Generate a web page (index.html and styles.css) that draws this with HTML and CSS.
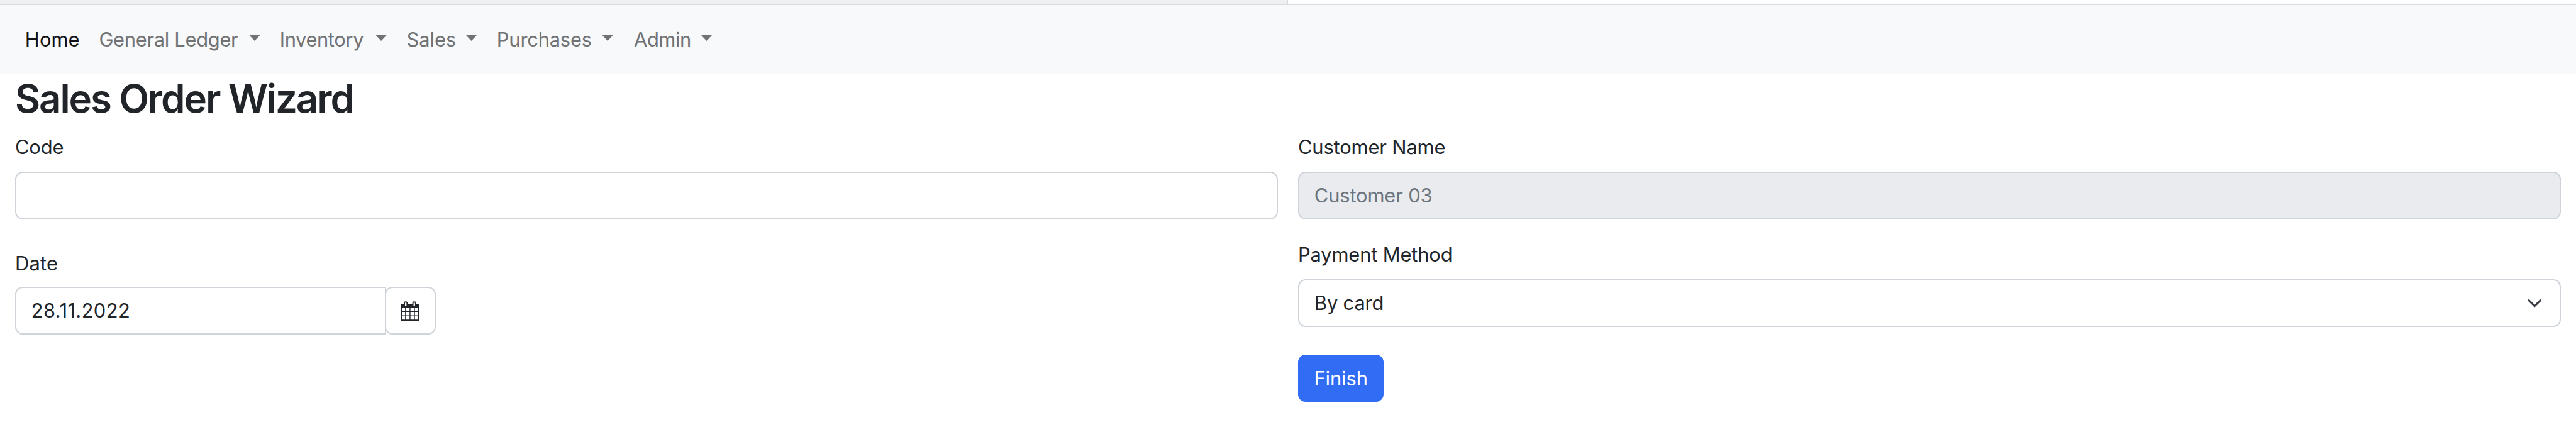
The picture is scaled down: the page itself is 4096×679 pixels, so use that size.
FILE: index.html
```
<!DOCTYPE html>
<html lang="en">
<head>
<meta charset="utf-8">
<title>Sales Order Wizard</title>
<link rel="stylesheet" href="styles.css">
</head>
<body>
<div class="tabstrip"><div class="tab-inactive"></div></div>
<nav class="navbar">
  <a class="nav-link home active">Home</a>
  <a class="nav-link ledger">General Ledger<i class="caret"></i></a>
  <a class="nav-link inventory">Inventory<i class="caret"></i></a>
  <a class="nav-link sales">Sales<i class="caret"></i></a>
  <a class="nav-link purchases">Purchases<i class="caret"></i></a>
  <a class="nav-link admin">Admin<i class="caret"></i></a>
</nav>
<main class="container">
  <h2 class="title">Sales Order Wizard</h2>
  <div class="row">
    <section class="col">
      <div class="field field-code">
        <label class="label">Code</label>
        <div class="control"></div>
      </div>
      <div class="field">
        <label class="label label-date">Date</label>
        <div class="date-group">
          <div class="control date-input">28.11.2022</div>
          <button class="control date-button" aria-label="Choose date">
            <svg class="calendar" viewBox="0 0 30 33">
              <path fill="#212529" d="M3 5H5V4.500a3.200 3.200 0 0 1 6.400 0V5H18.600V4.500a3.200 3.200 0 0 1 6.400 0V5H27a3 3 0 0 1 3 3V30a2.500 2.500 0 0 1-2.500 2.500H2.500A2.500 2.500 0 0 1 0 30V8A3 3 0 0 1 3 5Z"/>
              <path fill="#fff" d="M7 4.300a1.200 1.200 0 0 1 2.400 0V9H7ZM20.600 4.300a1.200 1.200 0 0 1 2.400 0V9H20.600ZM2 11.500H7.200V16.500H2ZM8.600 11.500H14.300V16.500H8.600ZM15.700 11.500H21.400V16.500H15.700ZM22.800 11.500H28V16.500H22.800ZM2 18H7.200V23.500H2ZM8.600 18H14.300V23.500H8.600ZM15.700 18H21.400V23.500H15.700ZM22.800 18H28V23.500H22.800ZM2 25H7.200V30.500H2ZM8.600 25H14.300V30.500H8.600ZM15.700 25H21.400V30.500H15.700ZM22.800 25H28V30.500H22.800Z"/>
            </svg>
          </button>
        </div>
      </div>
    </section>
    <section class="col">
      <div class="field field-customer">
        <label class="label">Customer Name</label>
        <div class="control disabled">Customer 03</div>
      </div>
      <div class="field field-payment">
        <label class="label">Payment Method</label>
        <div class="control select">By card
          <svg class="chevron" viewBox="0 0 16 16"><path fill="none" stroke="#343a40" stroke-linecap="round" stroke-linejoin="round" stroke-width="2" d="m2 5 6 6 6-6"/></svg>
        </div>
      </div>
      <button class="finish">Finish</button>
    </section>
  </div>
</main>
</body>
</html>
```
FILE: styles.css
```
* { box-sizing: border-box; }

html { font-size: 9.961px; }

body {
  margin: 0;
  background: #fff;
  color: #212529;
  font-family: Inter, "Liberation Sans", sans-serif;
  font-size: 3.1rem;
  line-height: 4.8rem;
  letter-spacing: -0.015rem;
  overflow: hidden;
}

.tabstrip {
  height: 0.8rem;
  border-bottom: 2px solid #d9dcde;
}

.tab-inactive {
  width: 205.6rem;
  height: 100%;
  background: #f0f0f0;
  border-right: 2px solid #d9d9d9;
}

.navbar {
  display: flex;
  align-items: center;
  height: 11rem;
  padding-left: 4rem;
  background: #f8f9fb;
}

.nav-link {
  display: flex;
  align-items: center;
  justify-content: space-between;
  color: #717273;
  white-space: nowrap;
}

.active { color: #111213; }

.home { width: 8.8rem; margin-right: 3rem; letter-spacing: 0.01rem; }
.ledger { width: 25.75rem; margin-right: 3.1rem; letter-spacing: -0.03rem; }
.inventory { width: 17.1rem; margin-right: 3.15rem; letter-spacing: -0.038rem; }
.sales { width: 11.25rem; margin-right: 3.15rem; letter-spacing: 0; }
.purchases { width: 18.6rem; margin-right: 3.3rem; letter-spacing: -0.022rem; }
.admin { width: 12.5rem; letter-spacing: -0.04rem; }

.caret {
  width: 1.8rem;
  height: 0.95rem;
  margin-top: -0.5rem;
  background: #717273;
  clip-path: polygon(0 0, 100% 0, 50% 100%);
}

.container { padding: 0.1rem 2.4rem 0; }

.title {
  margin: 0 0 1.5rem;
  font-size: 6.2rem;
  font-weight: 600;
  line-height: 7.7rem;
  letter-spacing: -0.205rem;
}

.row {
  display: grid;
  grid-template-columns: 1fr 1fr;
  column-gap: 3.2rem;
}

.label {
  display: block;
  margin-bottom: 1.5rem;
}

.label-date { margin-bottom: 1.3rem; letter-spacing: 0.02rem; }

.control {
  display: flex;
  align-items: center;
  height: 7.6rem;
  padding: 0 2.4rem;
  border: 2px solid #ced4da;
  border-radius: 1.2rem;
  background: #fff;
}

.disabled {
  background: #e9ebef;
  color: #6c757d;
}

.field-code { margin-bottom: 4.7rem; }
.field-customer { margin-bottom: 3.3rem; }
.field-payment { margin-bottom: 4.4rem; }

.date-group { display: flex; }

.date-input {
  width: 59.2rem;
  border-radius: 1.2rem 0 0 1.2rem;
  letter-spacing: 0.04rem;
}

.date-button {
  justify-content: center;
  width: 8.2rem;
  margin-left: -2px;
  padding: 0;
}

.calendar { width: 3rem; height: 3.3rem; }

.select { justify-content: space-between; }

.chevron {
  width: 2.45rem;
  height: 2.45rem;
  margin-right: 0.35rem;
}

.finish {
  display: block;
  height: 7.6rem;
  width: 13.7rem;
  padding: 0;
  border: 0;
  border-radius: 1.2rem;
  background: #316cf4;
  color: #fff;
  font: inherit;
  letter-spacing: -0.008rem;
}
```
